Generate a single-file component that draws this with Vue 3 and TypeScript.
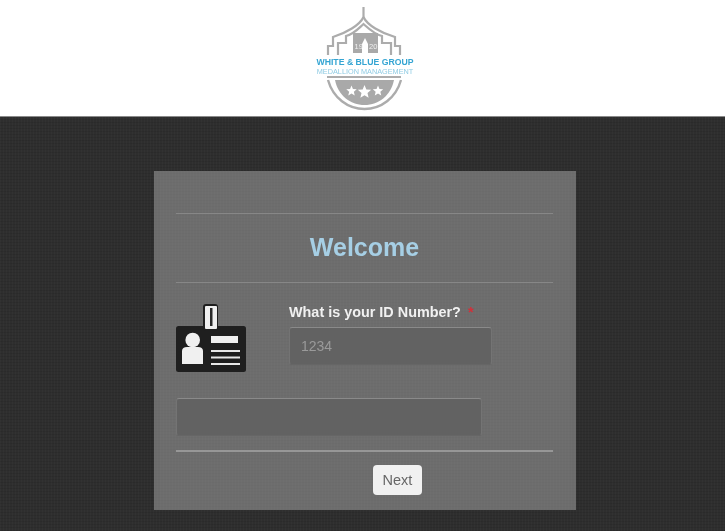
<script setup lang="ts">
const stars: number[][] = [[51.5, 91, 5.5], [64.5, 92, 7], [78, 91, 5.5]]
function starPoints(cx: number, cy: number, r: number): string {
  const pts: string[] = []
  for (let i = 0; i < 10; i++) {
    const rad = i % 2 === 0 ? r : r * 0.45
    const a = -Math.PI / 2 + (i * Math.PI) / 5
    pts.push(`${(cx + rad * Math.cos(a)).toFixed(2)},${(cy + rad * Math.sin(a)).toFixed(2)}`)
  }
  return pts.join(' ')
}
</script>

<template>
  <div class="page">
    <header class="top">
      <svg class="logo" viewBox="0 0 130 120" width="130" height="120">
        <g fill="none" stroke="#acacac" stroke-width="2.200">
          <path d="M63.500 7V17C60 25 46 33 33 37V46H28V55" />
          <path d="M63.500 17C67 25 81 33 95 37V46H100V55" />
          <path d="M38 55V43H46V36C54 34 59 28 63.500 24C68 28 74 34 82 36V43H91V55" />
          <path d="M27 77H101" stroke-width="1.800" />
          <path d="M28 80C33 98 48 109 64.500 109C81 109 96 98 101 80" stroke-width="2.400" />
        </g>
        <path d="M53 33H78V53H53Z" fill="#a9a9a9" />
        <path d="M62 53V44L65 38L68 44V53Z" fill="#ffffff" />
        <text x="54.500" y="49" class="year">19</text>
        <text x="69" y="49" class="year">20</text>
        <text x="65" y="64.500" class="brand">WHITE &amp; BLUE GROUP</text>
        <text x="65" y="74" class="sub">MEDALLION MANAGEMENT</text>
        <path d="M35 80H94C91 95 79 105 64.500 105C50 105 38 95 35 80Z" fill="#a9a9a9" />
        <polygon v-for="s in stars" :key="s[0]" :points="starPoints(s[0], s[1], s[2])" fill="#ffffff" />
      </svg>
    </header>

    <main class="stage">
      <section class="card">
        <hr class="rule" />
        <h1 class="title">Welcome</h1>
        <hr class="rule" />
        <div class="question">
          <svg class="badge" viewBox="0 0 70 68" width="70" height="68">
            <rect x="0" y="22" width="70" height="46" rx="2.500" fill="#1f1f1f" />
            <rect x="27" y="0" width="15" height="27" rx="3" fill="#1f1f1f" />
            <rect x="29" y="2" width="12" height="23" rx="1" fill="#f0f0f0" />
            <rect x="34" y="4" width="2.500" height="18" fill="#2a2a2a" />
            <circle cx="16.700" cy="36" r="7.300" fill="#f0f0f0" />
            <path d="M6 60V47C6 44.500 8 43 11 43H22C25 43 27 44.500 27 47V60Z" fill="#f0f0f0" />
            <rect x="35" y="32" width="27" height="7" fill="#f0f0f0" />
            <rect x="35" y="46" width="29" height="2" fill="#e8e8e8" />
            <rect x="35" y="52.500" width="29" height="2" fill="#e8e8e8" />
            <rect x="35" y="59" width="29" height="2" fill="#e8e8e8" />
          </svg>
          <div class="field">
            <label class="label" for="idnum">What is your ID Number? <span class="req">*</span></label>
            <input id="idnum" class="input" type="text" placeholder="1234" />
          </div>
        </div>
        <input class="input wide" type="text" aria-label="Answer" />
        <hr class="rule strong" />
        <div class="actions">
          <button class="next" type="button">Next</button>
        </div>
      </section>
    </main>
  </div>
</template>

<style>
html, body { margin: 0; padding: 0; background: #2c2c2c; }
</style>

<style scoped>
.page {
  width: 725px;
  height: 531px;
  overflow: hidden;
  display: flex;
  flex-direction: column;
  font-family: "Liberation Sans", Arial, sans-serif;
  filter: blur(0.4px);
}
.top {
  height: 116px;
  background: #ffffff;
  display: flex;
  justify-content: center;
  border-bottom: 1px solid #8a8a8a;
  flex: none;
}
.logo { margin-left: 5px; flex: none; }
.year { font-size: 7.500px; fill: #f0f0f0; font-family: "Liberation Sans", sans-serif; }
.brand {
  font-size: 8.700px;
  font-weight: 700;
  fill: #35a5d3;
  text-anchor: middle;
  font-family: "Liberation Sans", sans-serif;
}
.sub {
  font-size: 7.300px;
  fill: #8fcbe3;
  text-anchor: middle;
  font-family: "Liberation Sans", sans-serif;
}
.stage {
  flex: 1;
  display: flex;
  justify-content: center;
  align-items: flex-start;
  padding-top: 54px;
  background-color: #2e2e2e;
  background-image:
    repeating-linear-gradient(0deg, rgba(0,0,0,.08) 0 1px, transparent 1px 3px),
    repeating-linear-gradient(90deg, rgba(255,255,255,.02) 0 1px, transparent 1px 3px);
}
.card {
  width: 422px;
  height: 339px;
  margin-left: 5px;
  box-sizing: border-box;
  padding: 42px 23px 0 22px;
  background-color: #6d6d6d;
  background-image:
    repeating-linear-gradient(0deg, rgba(0,0,0,.02) 0 1px, transparent 1px 3px),
    repeating-linear-gradient(90deg, rgba(255,255,255,.015) 0 1px, transparent 1px 3px);
  display: flex;
  flex-direction: column;
}
.rule {
  margin: 0;
  border: 0;
  height: 1px;
  background: #878787;
  flex: none;
}
.rule.strong { height: 2px; background: #979797; margin-top: 14px; }
.title {
  margin: 0;
  height: 68px;
  line-height: 66px;
  text-align: center;
  font-size: 25px;
  font-weight: 700;
  color: #a6cfe5;
}
.question {
  display: flex;
  align-items: flex-start;
  margin-top: 20px;
  height: 79px;
}
.badge { margin-top: 1px; flex: none; }
.field { margin-left: 43px; display: flex; flex-direction: column; }
.label {
  font-size: 14.400px;
  font-weight: 700;
  color: #f1f1f1;
  line-height: 18px;
  margin-bottom: 6px;
}
.req { color: #d3303a; margin-left: 3px; }
.input {
  width: 203px;
  height: 38px;
  box-sizing: border-box;
  padding: 0 11px;
  background: #626262;
  border: 1px solid #747474;
  border-top-color: #8a8a8a;
  border-bottom-color: #666666;
  border-radius: 3px;
  font-size: 14px;
  font-family: "Liberation Sans", Arial, sans-serif;
  color: #dddddd;
  outline: none;
}
.input::placeholder { color: #9a9a9a; opacity: 1; }
.input.wide { width: 306px; margin-top: 16px; flex: none; }
.actions { display: flex; margin: 13px 0 0 197px; }
.next {
  width: 49px;
  height: 30px;
  padding: 0;
  background: #f1f1f1;
  border: 0;
  border-radius: 4px;
  font-size: 14.500px;
  font-family: "Liberation Sans", Arial, sans-serif;
  color: #666666;
}
</style>
